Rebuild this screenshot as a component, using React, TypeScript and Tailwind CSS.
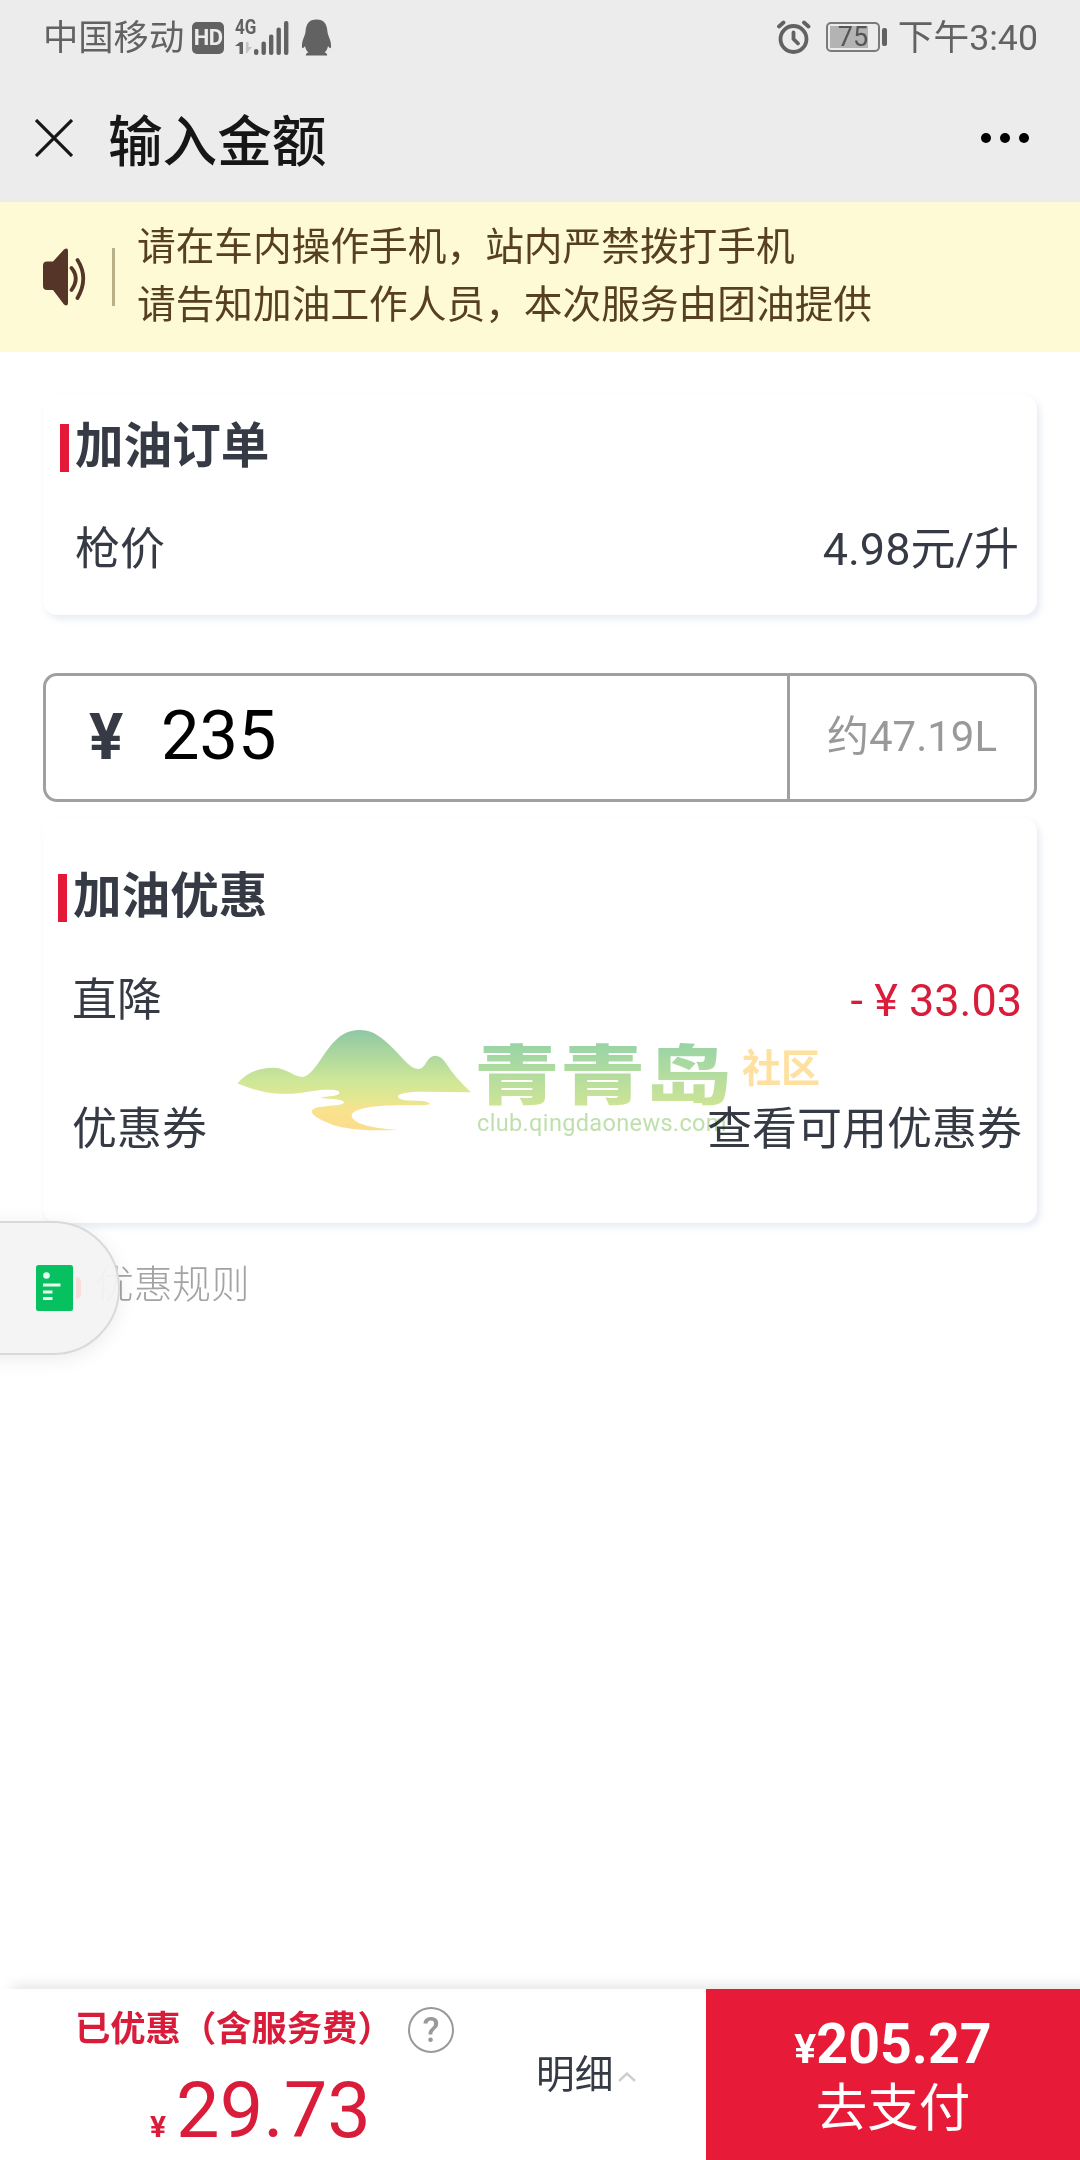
import React from 'react';

const StatusBar: React.FC = () => (
  <div className="flex h-[76px] items-center justify-between pl-[43px] pr-[42px] text-[35.3px] leading-none text-[#626262]">
    <div className="flex items-center">
      <span className="mt-[2px]">中国移动</span>
      <span className="ml-[8px] flex h-[32px] w-[32px] items-center justify-center rounded-[5px] bg-[#626262] font-['Roboto'] text-[22px] font-bold tracking-[-0.5px] text-[#ececec]">
        HD
      </span>
      <div className="ml-[11px] flex h-[36px] w-[55px] flex-col">
        <span className="-mt-[2px] h-[21px] origin-left scale-x-[0.850] font-['Roboto'] text-[20px] font-bold leading-[19px]">4G</span>
        {/* data arrows and signal bars */}
        <svg className="mt-[-19px]" width="55" height="36" viewBox="0 0 55 36" fill="#626262">
          <path d="M0 26 L5 22 H8 V34 H4.500 V26 Z" />
          <path d="M11 22 V34 L17 27 H13.500 V22 Z" fill="#c4c4c4" />
          <rect x="19" y="29" width="4.400" height="6" rx="2" />
          <rect x="26.500" y="21.500" width="4.400" height="13.500" rx="2" />
          <rect x="34" y="14.500" width="4.400" height="20.500" rx="2" />
          <rect x="41.500" y="7.500" width="4.400" height="27.500" rx="2" />
          <rect x="49" y="1" width="4.400" height="34" rx="2" />
        </svg>
      </div>
      <svg className="ml-[11px]" width="31" height="37" viewBox="0 0 31 37" fill="#626262">
        <path d="M15.500 0.500 C8 0.500 5 5 4.500 13 C4 17 1 21 1 26 C0.500 30 2 30 4 27 C4.500 30 5.500 32 7.500 33.500 C5 34 4.500 36 5 36.500 H26 C26.500 36 26 34 23.500 33.500 C25.500 32 26.500 30 27 27 C29 30 30.500 30 30 26 C30 21 27 17 26.500 13 C26 5 23 0.500 15.500 0.500 Z" />
      </svg>
    </div>

    <div className="flex items-center">
      <svg className="-mt-[2px]" width="34" height="36" viewBox="0 0 34 36" fill="none" stroke="#626262" strokeLinecap="round">
        <circle cx="16.500" cy="20" r="13" strokeWidth="3.800" />
        <path d="M16.500 13.500 V20 L21 24.500" strokeWidth="3.800" />
        <path d="M2 7.500 L6.500 3.500 M31.500 7.500 L27 3.500" strokeWidth="3.800" />
      </svg>
      <span className="-mt-[2px] ml-[15px] flex h-[30px] w-[54px] items-center rounded-[5px] border-2 border-[#7a7a7a] p-[2px]">
        <span className="flex h-full w-[38px] items-center bg-[#b3b3b3] pl-[8px] pt-[1px] font-['Roboto'] text-[27px] text-[#555]">75</span>
      </span>
      <span className="-mt-[2px] ml-[2px] h-[18px] w-[5px] rounded-[2px] bg-[#626262]" />
      <span className="ml-[11px] mt-[1px] whitespace-nowrap text-[35.700px]">下午3:40</span>
    </div>
  </div>
);

const NavBar: React.FC = () => (
  <div className="flex h-[126px] items-start pl-[35px] pr-[51px] pt-[35px]">
    <svg className="mt-[8px]" width="38" height="38" viewBox="0 0 38 38" stroke="#161616" strokeWidth="3.200">
      <path d="M1 1 L37 37 M37 1 L1 37" />
    </svg>
    <h1 className="ml-[35px] mt-[3px] text-[54.600px] font-medium leading-[56px] text-[#161616]">输入金额</h1>
    <div className="ml-auto mt-[22px] flex gap-[9px]">
      <span className="h-[10px] w-[10px] rounded-full bg-black" />
      <span className="h-[10px] w-[10px] rounded-full bg-black" />
      <span className="h-[10px] w-[10px] rounded-full bg-black" />
    </div>
  </div>
);

const Notice: React.FC = () => (
  <div className="flex h-[150px] items-center bg-[#fffad6] pl-[43px] text-[#57401f]">
    <svg width="44" height="58" viewBox="0 0 44 58" fill="#553528">
      <path d="M4 13.500 H10 L21 1.500 Q25 -1 25 3 V55 Q25 59 21 56.500 L10 42 H4 Q0 42 0 38 V17.500 Q0 13.500 4 13.500 Z" />
      <path d="M28.500 20 Q37 30 28.500 42 M34.500 12 Q46 30 34.500 50" fill="none" stroke="#553528" strokeWidth="3.800" strokeLinecap="round" />
    </svg>
    <span className="ml-[25px] h-[58px] w-[3px] bg-[#b9b088]" />
    <p className="ml-[22px] mt-[-2px] text-[38.700px] leading-[58px]">
      请在车内操作手机，站内严禁拨打手机
      <br />
      请告知加油工作人员，本次服务由团油提供
    </p>
  </div>
);

const SectionTitle: React.FC<{ children: React.ReactNode }> = ({ children }) => (
  <div className="flex h-[48px] items-center">
    <span className="h-full w-[9px] bg-[#e31937]" />
    <h2 className="-mt-[2px] ml-[6px] text-[48.600px] font-bold leading-[48px]">{children}</h2>
  </div>
);

const Row: React.FC<{ label: string; children: React.ReactNode }> = ({ label, children }) => (
  <div className="flex h-[52px] items-center justify-between text-[45px] leading-[52px]">
    <span>{label}</span>
    {children}
  </div>
);

// Translucent forum mark that lies over the discount card
const Watermark: React.FC = () => (
  <div className="pointer-events-none absolute left-[220px] top-[1000px] h-[180px] w-[620px] mix-blend-multiply">
    <svg className="absolute inset-0" width="620" height="180" viewBox="0 0 1568 540" preserveAspectRatio="none">
      <defs>
        <linearGradient id="hill" x1="0" y1="90" x2="0" y2="390" gradientUnits="userSpaceOnUse">
          <stop offset="0" stopColor="#8fc7a4" />
          <stop offset="0.5" stopColor="#cde798" />
          <stop offset="0.68" stopColor="#e2e792" />
          <stop offset="0.8" stopColor="#f9e28e" />
          <stop offset="1" stopColor="#fbdd8c" />
        </linearGradient>
      </defs>
      <path
        fill="url(#hill)"
        d="M44 250 C65 220 95 203 135 203 C172 205 185 230 209 231 C235 228 255 170 285 130 C310 95 335 90 355 90 C390 91 412 115 440 148 C465 178 482 208 502 207 C522 205 522 168 544 167 C566 168 572 195 592 223 C608 248 622 262 635 277 L510 275 C478 275 450 280 450 290 C452 302 480 301 505 302 C525 304 530 308 530 311 C526 317 500 316 465 316 C390 316 335 325 333 347 C335 372 390 386 450 389 C380 394 320 388 285 374 C250 360 232 345 232 334 C234 318 275 319 300 315 C318 311 318 303 300 299 C285 295 260 297 256 293 C262 288 302 290 302 278 C300 266 262 269 235 273 C200 281 150 287 105 274 C80 267 60 258 44 250 Z"
      />
    </svg>
    <span className="absolute left-[254px] top-[42px] origin-left scale-x-[1.330] whitespace-nowrap bg-gradient-to-b from-[#96d3a6] to-[#d2e693] bg-clip-text text-[64.500px] font-black leading-[70px] text-transparent">
      青青岛
    </span>
    <span className="absolute left-[522px] top-[48px] whitespace-nowrap text-[39px] font-bold leading-[42px] text-[#fee0a0]">社区</span>
    <span className="absolute left-[257px] top-[109px] whitespace-nowrap font-['Roboto'] text-[23.500px] leading-[28px] tracking-[0.350px] text-[#bfe0ad]">
      club.qingdaonews.com
    </span>
  </div>
);

const FloatingTab: React.FC = () => (
  <div className="absolute left-[-20px] top-[1221px] flex h-[134px] w-[140px] items-center rounded-r-[67px] border-2 border-[#d9d9d9] bg-[#f3f3f3]/95 shadow-[0_4px_20px_rgba(0,0,0,0.08)]">
    <svg className="ml-[54px]" width="37" height="46" viewBox="0 0 37 46">
      <rect width="37" height="46" rx="2.500" fill="#07c160" />
      <g fill="#e9faef">
        <circle cx="10.500" cy="10.500" r="3.300" />
        <rect x="7" y="18.500" width="17.500" height="3" />
        <rect x="7" y="25.500" width="9.500" height="3" />
        <rect x="7" y="32" width="9.500" height="3" />
      </g>
    </svg>
    <span className="ml-[3px] h-[22px] w-[5px] rounded-r-full bg-[#f9dcdc]" />
  </div>
);

const PayBar: React.FC = () => (
  <div className="flex h-[171px] bg-white shadow-[12px_-4px_12px_rgba(0,0,0,0.1)]">
    <div className="w-[536px] pl-[75px] text-[#d91c3a]">
      <div className="mt-[18px] flex h-[46px] items-center">
        <span className="w-[318px] whitespace-nowrap text-[35.300px] font-bold leading-none">已优惠（含服务费）</span>
        <span className="ml-[15px] flex h-[46px] w-[46px] items-center justify-center rounded-full border-[2.500px] border-[#999] font-['Roboto'] text-[35px] font-medium leading-none text-[#999]">
          ?
        </span>
      </div>
      <div className="mt-[18px] flex items-baseline pl-[75px] leading-[80px]">
        <span className="text-[30px] font-bold">¥</span>
        <span className="ml-[10px] text-[77.500px]">29.73</span>
      </div>
    </div>
    <div className="flex w-[170px] items-center text-[38.700px]">
      <span className="leading-[48px]">明细</span>
      <svg className="ml-[5px] mt-[4px]" width="18" height="10" viewBox="0 0 18 10" fill="none" stroke="#cfcfcf" strokeWidth="2.400">
        <path d="M1 9 L9 1.500 L17 9" />
      </svg>
    </div>
    <button className="flex flex-1 flex-col items-center bg-[#e71a37] pt-[26px] text-white">
      <span className="text-[55.500px] font-bold leading-[60px]">
        <span className="text-[41px]">¥</span>205.27
      </span>
      <span className="mt-[1px] text-[51.500px] leading-[58px]">去支付</span>
    </button>
  </div>
);

export default function App() {
  return (
    <div className="relative flex h-[2160px] w-[1080px] flex-col overflow-hidden bg-white font-['Roboto','Noto_Sans_CJK_SC',sans-serif] text-[#363a45]">
      <header className="bg-[#ececec]">
        <StatusBar />
        <NavBar />
      </header>
      <Notice />

      <main className="flex-1 px-[43px]">
        <section className="mt-[43px] h-[220px] rounded-[14px] pl-[17px] pr-[18px] pt-[29px] shadow-[3px_4px_7px_rgba(110,150,190,0.18)]">
          <SectionTitle>加油订单</SectionTitle>
          <div className="mt-[52px] pl-[15px]">
            <Row label="枪价">
              <span>4.98元/升</span>
            </Row>
          </div>
        </section>

        <div className="mt-[58px] flex h-[129px] items-center rounded-[14px] border-3 border-[#a0a0a0]">
          <span className="ml-[43px] w-[72px] text-[64px] font-bold leading-none">¥</span>
          <span className="-mt-[2px] text-[68.500px] leading-none text-black">235</span>
          <span className="ml-auto flex h-full w-[247px] items-center justify-center border-l-3 border-[#a0a0a0] pb-[2px] text-[42px] text-[#999]">
            约47.19L
          </span>
        </div>

        <section className="mt-[16px] h-[405px] rounded-[14px] pl-[15px] pr-[15px] pt-[56px] shadow-[3px_4px_7px_rgba(110,150,190,0.18)]">
          <SectionTitle>加油优惠</SectionTitle>
          <div className="mt-[53px] flex flex-col gap-[77px] pl-[14px]">
            <Row label="直降">
              <span className="text-[#d91c3a]">- ¥ 33.03</span>
            </Row>
            <Row label="优惠券">
              <span>查看可用优惠券</span>
            </Row>
          </div>
        </section>

        <p className="mt-[38px] pl-[52px] text-[38.700px] font-light leading-[48px] text-[#a3a3a3]">优惠规则</p>
      </main>

      <PayBar />
      <Watermark />
      <FloatingTab />
    </div>
  );
}
